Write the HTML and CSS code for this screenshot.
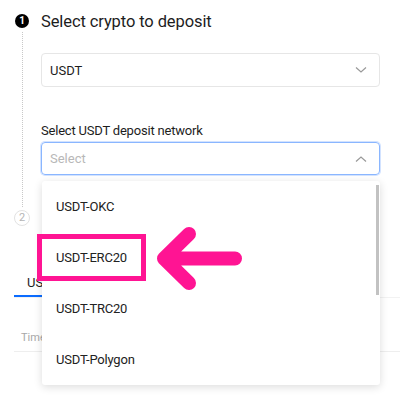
FILE: index.html
```html
<!DOCTYPE html>
<html lang="en">
<head>
  <meta charset="UTF-8">
  <meta name="viewport" content="width=device-width, initial-scale=1.0">
  <title>Deposit</title>
  <link rel="stylesheet" href="styles.css">
</head>
<body>
  <div class="page">
    <div class="step step-one">
      <div class="rail">
        <div class="num num-active">1</div>
        <div class="dots"></div>
      </div>
      <div class="step-body">
        <h2>Select crypto to deposit</h2>
        <div class="select">
          <span>USDT</span>
          <svg class="chev" width="12" height="8" viewBox="0 0 12 8"><path d="M1 1.5 L6 6 L11 1.5" fill="none" stroke="#999" stroke-width="1.2"/></svg>
        </div>
        <p class="label">Select USDT deposit network</p>
        <div class="select select-open">
          <span class="placeholder">Select</span>
          <svg class="chev" width="12" height="8" viewBox="0 0 12 8"><path d="M1 6.5 L6 2 L11 6.5" fill="none" stroke="#999" stroke-width="1.2"/></svg>
        </div>
      </div>
    </div>

    <div class="step step-two">
      <div class="rail">
        <div class="num">2</div>
      </div>
      <div class="step-body"></div>
    </div>

    <div class="records">
      <div class="tabs">
        <div class="tab tab-active">USDT</div>
      </div>
      <div class="table-head">Time</div>
    </div>

    <!-- dropdown list of networks -->
    <div class="dropdown">
      <div class="option">USDT-OKC</div>
      <div class="option">USDT-ERC20</div>
      <div class="option">USDT-TRC20</div>
      <div class="option">USDT-Polygon</div>
      <div class="scroll-thumb"></div>
    </div>

    <!-- annotation -->
    <div class="mark-box"></div>
    <svg class="mark-arrow" width="100" height="80" viewBox="0 0 100 80">
      <path d="M85 38.5 H14 M39 14 L14 38.5 L39 63" fill="none" stroke="#ff1493" stroke-width="14" stroke-linecap="round" stroke-linejoin="round"/>
    </svg>
  </div>
</body>
</html>
```

FILE: styles.css
```css
* {
  box-sizing: border-box;
}
body {
  margin: 0;
  font-family: Roboto, "Noto Sans", sans-serif;
  background-color: #fff;
  color: #1d1d1d;
}
.page {
  position: relative;
  width: 400px;
  height: 406px;
  overflow: hidden;
}
.step {
  display: flex;
  padding-left: 15px;
  padding-right: 20px;
}
.rail {
  width: 14px;
  margin-right: 12px;
  display: flex;
  flex-direction: column;
  align-items: center;
}
.num {
  width: 14px;
  height: 14px;
  border-radius: 50%;
  font-size: 10px;
  line-height: 14px;
  text-align: center;
  flex-shrink: 0;
}
.num-active {
  margin-top: 14px;
  background-color: #000;
  color: #fff;
  font-weight: 700;
}
.dots {
  flex: 1;
  border-left: 1px dotted #c8c8c8;
  margin-top: 4px;
}
.step-body {
  flex: 1;
}
.step-body h2 {
  margin: 10px 0 0;
  font-size: 16.5px;
  line-height: 24px;
  font-weight: 400;
  letter-spacing: -0.1px;
}
.select {
  height: 34px;
  border: 1px solid #e6e6e6;
  border-radius: 4px;
  display: flex;
  align-items: center;
  justify-content: space-between;
  padding: 0 12px 0 8px;
  font-size: 13px;
  margin-top: 19px;
}
.select-open {
  margin-top: 3px;
  height: 33px;
  border-color: #8ab6ff;
  box-shadow: 0 0 0 1px #d3e3ff;
}
.placeholder {
  color: #b8b8b8;
}
.label {
  margin: 36px 0 0;
  font-size: 13px;
  line-height: 16px;
  letter-spacing: -0.2px;
}
.step-one .step-body {
  padding-bottom: 32px;
}
.step-two {
  height: 68px;
}
.step-two .num {
  width: 16px;
  height: 16px;
  line-height: 14px;
  border: 1px solid #e2e2e2;
  color: #b5b5b5;
  font-size: 11px;
  margin-top: 3px;
}
.records {
  margin-left: 14px;
}
.tabs {
  display: flex;
  border-bottom: 1px solid #f2f2f2;
}
.tab {
  font-size: 13px;
  padding: 0 13px 5px;
}
.tab-active {
  border-bottom: 2px solid #0b6cff;
}
.table-head {
  font-size: 11px;
  color: #a8a8a8;
  padding: 33px 7px 7px;
  border-bottom: 1px solid #eeeeee;
}
.dropdown {
  position: absolute;
  left: 42px;
  top: 181px;
  width: 338px;
  height: 204px;
  background-color: #fff;
  border-radius: 3px;
  box-shadow: 0 2px 8px rgba(0, 0, 0, 0.14);
}
.option {
  height: 51px;
  line-height: 51px;
  padding-left: 14px;
  font-size: 13px;
  letter-spacing: -0.2px;
  color: #222;
}
.scroll-thumb {
  position: absolute;
  right: 1px;
  top: 4px;
  width: 3px;
  height: 110px;
  background-color: #c2c2c2;
}
.mark-box {
  position: absolute;
  left: 37px;
  top: 234px;
  width: 109px;
  height: 47px;
  border: 5px solid #ff1493;
}
.mark-arrow {
  position: absolute;
  left: 150px;
  top: 220px;
}
```
